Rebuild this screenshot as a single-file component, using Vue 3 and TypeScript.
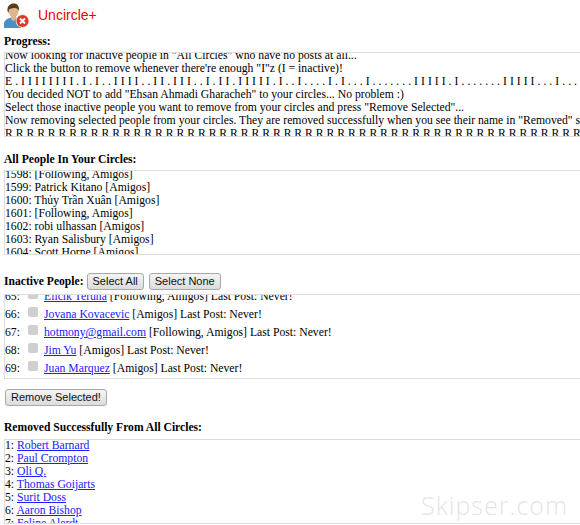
<script setup lang="ts">
const progress: string[] = [
  'Now looking for inactive people in "All Circles" who have no posts at all...',
  'Click the button to remove whenever there\'re enough "I"z (I = inactive)!',
  'E . I I I I I I I I . I . I . . I I I I . . I I . I I I . . I . I I . I I I I I . I . . I . . . . I . I . . . I . . . . . . . I I I I I . I . . . . . . . I I I I I . . . I . . . I',
  'You decided NOT to add "Ehsan Ahmadi Gharacheh" to your circles... No problem :)',
  'Select those inactive people you want to remove from your circles and press "Remove Selected"...',
  'Now removing selected people from your circles. They are removed successfully when you see their name in "Removed" section below',
  Array(60).fill('R').join(' '),
]
const people: string[] = [
  '1598: [Following, Amigos]',
  '1599: Patrick Kitano [Amigos]',
  '1600: Thủy Trần Xuân [Amigos]',
  '1601: [Following, Amigos]',
  '1602: robi ulhassan [Amigos]',
  '1603: Ryan Salisbury [Amigos]',
  '1604: Scott Horne [Amigos]',
]
interface Inactive { n: number; name: string; tags: string }
const inactive: Inactive[] = [
  { n: 65, name: 'Elicik Teruna', tags: '[Following, Amigos]' },
  { n: 66, name: 'Jovana Kovacevic', tags: '[Amigos]' },
  { n: 67, name: 'hotmony@gmail.com', tags: '[Following, Amigos]' },
  { n: 68, name: 'Jim Yu', tags: '[Amigos]' },
  { n: 69, name: 'Juan Marquez', tags: '[Amigos]' },
]
const removed: string[] = [
  'Robert Barnard', 'Paul Crompton', 'Oli Q.', 'Thomas Goijarts',
  'Surit Doss', 'Aaron Bishop', 'Feline Alerdt',
]
</script>

<template>
  <div class="page">
    <header class="head">
      <svg class="logo" width="26" height="26" viewBox="0 0 26 26" aria-hidden="true">
        <path d="M0 25 V20 C1 16.500 4 15.500 7 14.500 L12 14.500 C15 15.500 17 17 17 25 Z" fill="#4a90c8" />
        <path d="M7 13 L12 13 L12 16 L9.500 18.500 L7 16 Z" fill="#d9b48f" />
        <ellipse cx="9.500" cy="8" rx="5" ry="6.500" fill="#e0b48c" />
        <path d="M3.500 8 C3 2.500 6.500 0.500 9.500 0.500 C13.500 0.500 15.500 3 14.800 8 C14 5.500 12 4.500 10 5 C8 5.500 6 5.500 5 6.500 L4.500 10 Z" fill="#5b3a22" />
        <circle cx="18.500" cy="18" r="6.800" fill="#f3e3dd" />
        <circle cx="18.500" cy="18" r="6" fill="#d8392c" />
        <path d="M16 15.500 L21 20.500 M21 15.500 L16 20.500" stroke="#fff" stroke-width="2" />
      </svg>
      <span class="title">Uncircle+</span>
    </header>

    <h4 class="label first">Progress:</h4>
    <div class="box">
      <div class="shift-log">
        <div v-for="(line, i) in progress" :key="i" class="line" :class="{ dots: i === 2 }">{{ line }}</div>
      </div>
    </div>

    <h4 class="label second">All People In Your Circles:</h4>
    <div class="box">
      <div class="shift-people">
        <div v-for="p in people" :key="p" class="line">{{ p }}</div>
      </div>
    </div>

    <div class="actions">
      <strong class="action-label">Inactive People:</strong>
      <button type="button" class="btn">Select All</button>
      <button type="button" class="btn">Select None</button>
    </div>
    <div class="box">
      <div class="shift-inactive">
        <div v-for="p in inactive" :key="p.n" class="row">
          <span class="num">{{ p.n }}:</span>
          <input type="checkbox" class="check" disabled />
          <span><a href="#" class="link">{{ p.name }}</a> {{ p.tags }} Last Post: Never!</span>
        </div>
      </div>
    </div>

    <button type="button" class="btn remove">Remove Selected!</button>

    <h4 class="label third">Removed Successfully From All Circles:</h4>
    <div class="box">
      <div class="shift-removed">
        <div v-for="(r, i) in removed" :key="r" class="line">{{ i + 1 }}: <a href="#" class="link">{{ r }}</a></div>
      </div>
    </div>

    <div class="mark">Skipser.com</div>
  </div>
</template>

<style>
html, body { margin: 0; background: #fff; overflow: hidden; }
</style>

<style scoped>
.page {
  position: relative;
  width: 580px;
  height: 525px;
  overflow: hidden;
  box-sizing: border-box;
  padding-left: 4px;
  font-family: "Liberation Serif", "Noto Sans CJK SC", serif;
  font-size: 11.700px;
  line-height: 13px;
  color: #000;
}
.head {
  display: flex;
  align-items: center;
  height: 29px;
  padding-top: 1px;
}
.logo { flex: none; }
.title {
  margin-left: 8px;
  font-family: "Liberation Sans", sans-serif;
  font-size: 14px;
  color: #f00000;
}
.label {
  margin: 0;
  font-size: 11.600px;
  font-weight: bold;
  line-height: 14px;
}
.first { margin-top: 5px; margin-bottom: 3px; }
.second { margin-top: 16px; margin-bottom: 3px; }
.third { margin-top: 15px; margin-bottom: 4px; }
.box {
  height: 83px;
  overflow: hidden;
  border-style: solid;
  border-color: #dddddd;
  border-width: 1px 0 1px 1px;
  white-space: nowrap;
}
.line { height: 13px; }
.dots { word-spacing: 0.090px; }
.shift-log { margin-top: -4px; }
.shift-people { margin-top: -3px; }
.shift-inactive { margin-top: -7.500px; }
.shift-removed { margin-top: -1px; }
.actions {
  display: flex;
  align-items: center;
  height: 20px;
  margin-top: 16px;
  margin-bottom: 3px;
}
.action-label { font-size: 11.600px; margin-right: 3px; }
.btn {
  box-sizing: border-box;
  height: 17px;
  padding: 0 5px;
  margin-right: 5px;
  border: 1px solid #a8a8a8;
  border-radius: 3px;
  background: linear-gradient(#f4f4f4, #dcdcdc);
  font-family: "Liberation Sans", sans-serif;
  font-size: 11px;
  line-height: 15px;
  color: #111;
}
.row {
  display: flex;
  align-items: center;
  height: 18px;
}
.num { width: 23px; flex: none; }
.check {
  appearance: none;
  flex: none;
  box-sizing: border-box;
  width: 10px;
  height: 10px;
  margin: -6px 6px 0 0;
  border: 0;
  border-radius: 2px;
  background: #cfcfcf;
}
.link { color: #2020ff; text-decoration: underline; }
.remove {
  display: block;
  margin-top: 10px;
  margin-left: 1px;
  height: 17px;
  padding: 0 5px;
}
.mark {
  position: absolute;
  right: 12px;
  bottom: 8px;
  font-family: "Open Sans", sans-serif;
  font-size: 25px;
  font-weight: 300;
  line-height: 24px;
  letter-spacing: 1px;
  color: #e4e4e4;
}
</style>
